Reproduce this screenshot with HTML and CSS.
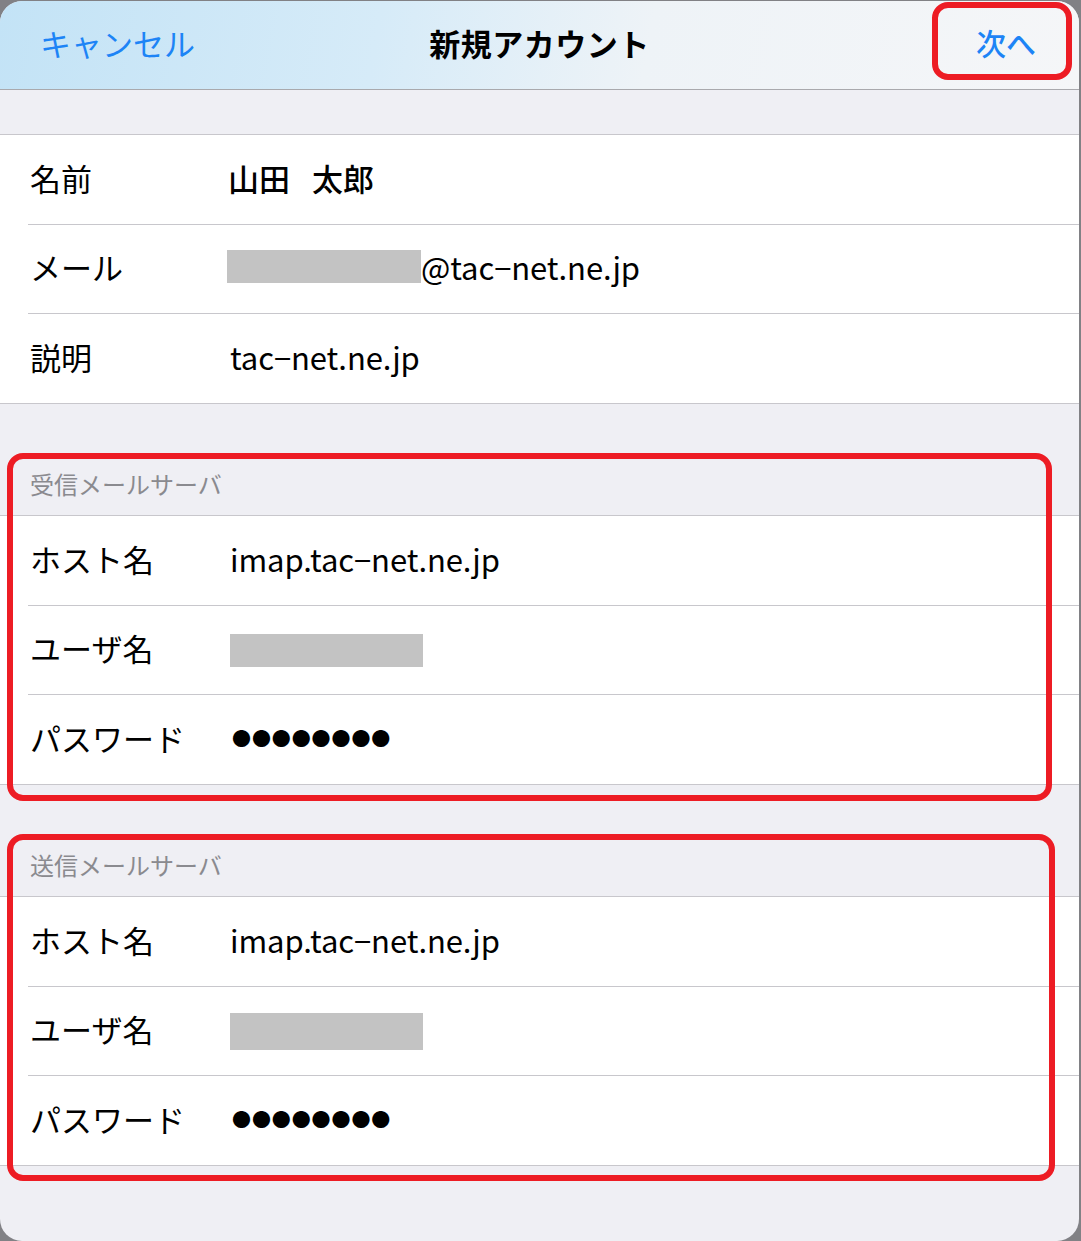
FILE: index.html
```html
<!DOCTYPE html>
<html>
<head lang="ja">
    <meta charset="UTF-8">
    <title>新規アカウント</title>
    <link rel="stylesheet" href="styles.css">
</head>
<body>
<div class="screen">
    <div class="nav">
        <a class="nav_cancel" href="#">キャンセル</a>
        <div class="nav_title">新規アカウント</div>
        <a class="nav_next" href="#">次へ<span class="mark mark_next"></span></a>
    </div>

    <ul class="list list_first">
        <li class="row"><span class="label">名前</span><span class="value value_name">山田 太郎</span></li>
        <li class="row"><span class="label">メール</span><span class="value"><span class="blank blank_mail"></span>@tac−net.ne.jp</span></li>
        <li class="row"><span class="label">説明</span><span class="value">tac−net.ne.jp</span></li>
    </ul>

    <div class="group">
        <div class="group_title">受信メールサーバ</div>
        <ul class="list">
            <li class="row"><span class="label">ホスト名</span><span class="value">imap.tac−net.ne.jp</span></li>
            <li class="row"><span class="label">ユーザ名</span><span class="value"><span class="blank"></span></span></li>
            <li class="row"><span class="label">パスワード</span><span class="value dots">●●●●●●●●</span></li>
        </ul>
        <span class="mark mark_in"></span>
    </div>

    <div class="group">
        <div class="group_title">送信メールサーバ</div>
        <ul class="list">
            <li class="row"><span class="label">ホスト名</span><span class="value">imap.tac−net.ne.jp</span></li>
            <li class="row"><span class="label">ユーザ名</span><span class="value"><span class="blank blank_tall"></span></span></li>
            <li class="row"><span class="label">パスワード</span><span class="value dots">●●●●●●●●</span></li>
        </ul>
        <span class="mark mark_out"></span>
    </div>
</div>
</body>
</html>
```

FILE: styles.css
```css
html, body {
    margin: 0;
    padding: 0;
}
body {
    background: #818185;
    font-family: "Noto Sans CJK JP", "Liberation Sans", sans-serif;
    color: #000;
    padding-top: 1px;
}
a {
    text-decoration: none;
}
.screen {
    width: 1079px;
    height: 1240px;
    background: #efeff4;
    border-radius: 22px;
    overflow: hidden;
}
.nav {
    position: relative;
    height: 88px;
    border-bottom: 1px solid #a9a9ad;
    background: linear-gradient(100deg, #c3e3f6 0%, #d6ebf8 35%, #eef3f7 60%, #f5f6f8 100%);
    display: grid;
    grid-template-columns: 1fr auto 1fr;
    align-items: center;
}
.nav > * {
    line-height: 31px;
    margin-bottom: 6px;
}
.nav_cancel {
    justify-self: start;
    padding-left: 40px;
    font-size: 31px;
    color: #1d84f6;
}
.nav_title {
    font-size: 31px;
    font-weight: 700;
    letter-spacing: 0.5px;
}
.nav_next {
    position: relative;
    display: block;
    justify-self: end;
    margin-right: 43px;
    font-size: 30px;
    font-weight: 500;
    color: #1d84f6;
}
.list {
    list-style: none;
    margin: 0;
    padding: 0 0 0 28px;
    background: #fff;
    border-top: 1px solid #c8c7cc;
    border-bottom: 1px solid #c8c7cc;
}
.list_first {
    margin-top: 44px;
}
.row {
    display: flex;
    align-items: center;
    height: 88.67px;
    border-bottom: 1px solid #c8c7cc;
    font-size: 31px;
}
.row:last-child {
    border-bottom: none;
}
.label, .value {
    margin-bottom: 4px;
}
.label {
    width: 200px;
    padding-left: 2px;
}
.value {
    display: flex;
    align-items: center;
    letter-spacing: -0.1px;
}
.value_name {
    font-weight: 500;
    letter-spacing: 0;
    word-spacing: 15px;
    margin-left: -2px;
}
.blank {
    display: inline-block;
    width: 193px;
    height: 33px;
    margin-top: 6px;
    background: #c3c3c3;
}
.blank_mail {
    width: 194px;
    margin-top: 0;
    margin-left: -3px;
}
.blank_tall {
    height: 37px;
}
.dots {
    font-size: 19px;
    letter-spacing: 0.9px;
    margin-left: 2px;
}
.group {
    position: relative;
}
.group_title {
    height: 111px;
    box-sizing: border-box;
    padding: 0 0 14px 30px;
    display: flex;
    align-items: flex-end;
    font-size: 24px;
    color: #8a8a8f;
}
.mark {
    position: absolute;
    border: 6px solid #ed1c24;
    border-radius: 16px;
}
.mark_next {
    top: -25px;
    left: -44px;
    right: -36px;
    bottom: -22px;
}
.mark_in {
    top: 49px;
    left: 7px;
    right: 27px;
    bottom: -16px;
}
.mark_out {
    top: 49px;
    left: 7px;
    right: 24px;
    bottom: -15px;
}
```
